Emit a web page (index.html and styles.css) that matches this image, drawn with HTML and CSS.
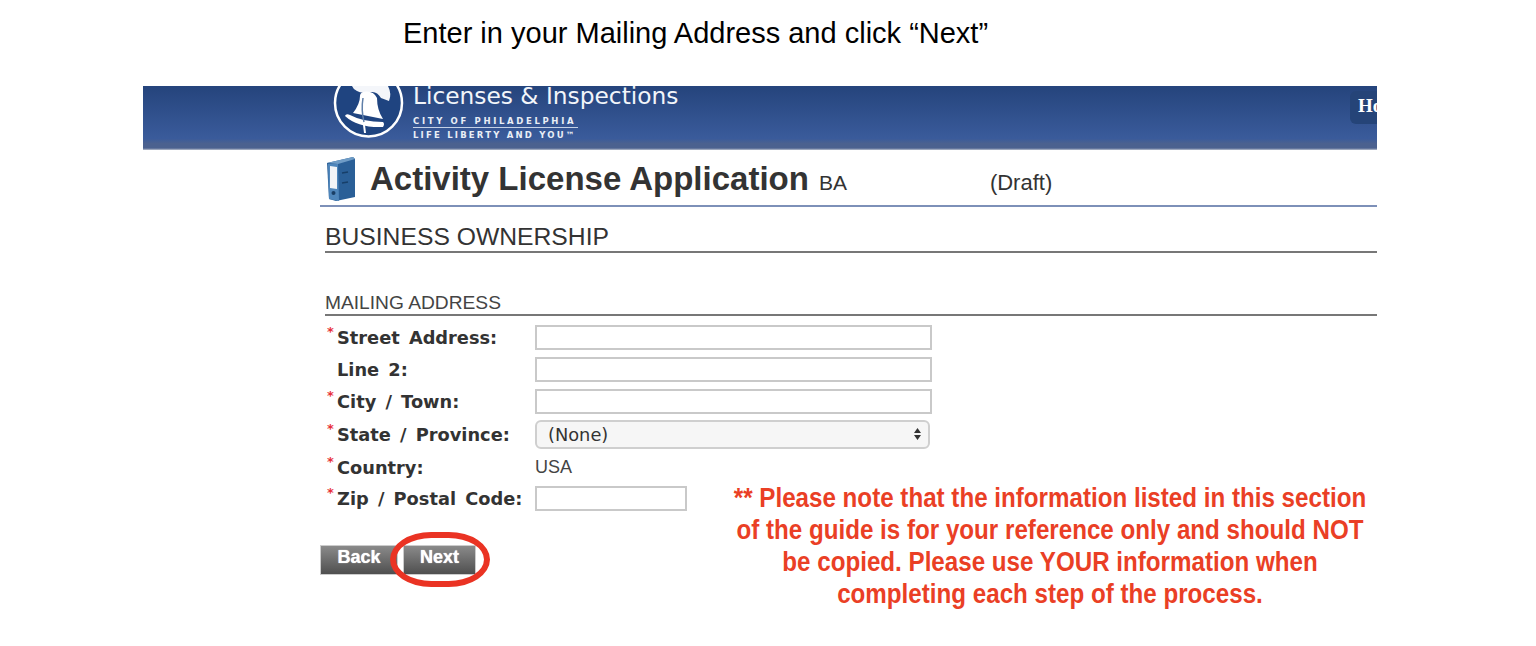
FILE: index.html
```html
<!DOCTYPE html>
<html lang="en">
<head>
<meta charset="utf-8">
<title>Activity License Application</title>
<link rel="stylesheet" href="styles.css">
</head>
<body>
<p class="caption">Enter in your Mailing Address and click “Next”</p>
<div class="frame">
  <header class="banner">
    <svg class="seal" width="74" height="58" viewBox="0 0 74 58" aria-hidden="true">
      <circle cx="35.500" cy="17" r="33.500" fill="#1f4480" stroke="#fff" stroke-width="2.500"/>
      <path d="M19 0 L55 0 Q59 8 56 15 L48 12 Q44 5 38 6 Q28 8 24 5 Q20 3 19 0Z" fill="#f4f6fa"/>
      <path d="M30 6 Q40 4 44 12 Q44 24 50 33 L20 27 Q27 18 27 10 Q27 7 30 6Z" fill="#fff"/>
      <path d="M12 30 Q13 27 17 29 Q30 36 50 36 Q52 38 50 41 Q25 42 12 30Z" fill="#fff"/>
      <path d="M30 12 Q28 24 31 36" stroke="#5f7fa9" stroke-width="1.500" fill="none"/>
      <path d="M31 39 L32 47" stroke="#fff" stroke-width="2" fill="none"/>
    </svg>
    <div class="brand">
      <div class="brand-name">Licenses &amp; Inspections</div>
      <div class="brand-city">CITY OF PHILADELPHIA</div>
      <div class="brand-tag">LIFE LIBERTY AND YOU™</div>
    </div>
    <div class="home">Home</div>
  </header>
  <main class="content">
    <div class="title-row">
      <svg class="binder" width="29" height="45" viewBox="0 0 29 45" aria-hidden="true">
        <path d="M0 6 L26 0 L28 2 L28 40 L9 44 L2 42Z" fill="#2a5f97"/>
        <path d="M0 6 L26 0 L28 2 L11 7Z" fill="#6f9cc6"/>
        <path d="M1 7 L11 7 L12 44 L2 42Z" fill="#4f86bb"/>
        <path d="M3 9 L10 10 L10 32 L3 31Z" fill="#f2f4f7"/>
        <path d="M15 16 L21 15 M15 26 L21 25" stroke="#173f69" stroke-width="1.500"/>
        <circle cx="6.500" cy="36" r="2" fill="#1a3f66"/>
      </svg>
      <h1 class="app-title">Activity License Application</h1>
      <span class="app-code">BA</span>
      <span class="app-state">(Draft)</span>
    </div>
    <h2 class="section-title">BUSINESS OWNERSHIP</h2>
    <h3 class="sub-title">MAILING ADDRESS</h3>
    <form class="form">
      <label class="label req">Street Address:</label><input class="field" type="text">
      <label class="label">Line 2:</label><input class="field" type="text">
      <label class="label req">City / Town:</label><input class="field" type="text">
      <label class="label req">State / Province:</label>
      <div class="select"><span>(None)</span>
        <svg width="9" height="14" viewBox="0 0 9 14" aria-hidden="true"><path d="M4.500 1 L8 6 H1Z M4.500 13 L8 8 H1Z" fill="#333"/></svg>
      </div>
      <label class="label req">Country:</label><div class="value">USA</div>
      <label class="label req">Zip / Postal Code:</label><input class="field zip" type="text">
    </form>
    <div class="actions">
      <button class="btn btn-back" type="button">Back</button>
      <button class="btn btn-next" type="button">Next</button>
      <span class="ring"></span>
    </div>
  </main>
  <p class="note">** Please note that the information listed in this section<br>of the guide is for your reference only and should NOT<br>be copied. Please use YOUR information when<br>completing each step of the process.</p>
</div>
</body>
</html>
```
FILE: styles.css
```css
html, body {
  margin: 0;
  height: 646px;
  overflow: hidden;
  background: #fff;
  font-family: "Liberation Sans", Arial, sans-serif;
  color: #333;
}
.caption {
  margin: 0;
  padding: 17px 0 0 403px;
  height: 86px;
  box-sizing: border-box;
  font-size: 29px;
  line-height: 32px;
  color: #000;
}
.frame {
  position: relative;
  width: 1234px;
  margin-left: 143px;
}
.banner {
  position: relative;
  display: flex;
  align-items: flex-start;
  height: 64px;
  box-sizing: border-box;
  padding-left: 190px;
  background: linear-gradient(#25447c, #3a5b9b 82%, #4b618f 90%, #4b618f 97%, #b9bfcc);
  overflow: hidden;
}
.seal { flex: none; }
.brand { margin-left: 6px; color: #fff; }
.brand-name {
  margin-top: -4px;
  font-family: "DejaVu Sans", sans-serif;
  font-size: 23.300px;
  line-height: 27px;
  color: #f2f5fa;
  white-space: nowrap;
}
.brand-city, .brand-tag {
  font-family: "DejaVu Sans", sans-serif;
  font-weight: 700;
  font-size: 8.500px;
  line-height: 12px;
  white-space: nowrap;
  width: 165px;
  color: #e9eef6;
}
.brand-city {
  margin-top: 6px;
  letter-spacing: 2.650px;
  border-bottom: 1px solid #c5d2e6;
}
.brand-tag { letter-spacing: 2.200px; margin-top: 1px; }
.home {
  position: absolute;
  left: 1207px;
  top: 5px;
  width: 60px;
  height: 33px;
  padding-left: 8px;
  border-radius: 6px;
  background: #254478;
  color: #fff;
  font-family: "Liberation Serif", serif;
  font-weight: 700;
  font-size: 19px;
  line-height: 30px;
}
.content {
  margin-left: 177px;
}
.title-row {
  display: flex;
  align-items: baseline;
  height: 55px;
  padding: 0 0 0 7px;
  border-bottom: 2px solid #7d90b8;
}
.binder {
  align-self: flex-start;
  margin-top: 7px;
  flex: none;
}
.app-title {
  margin: 0 0 0 14px;
  font-size: 33px;
  line-height: 58px;
  font-weight: 700;
  color: #333;
}
.app-code {
  margin-left: 10px;
  font-size: 21px;
}
.app-state {
  margin-left: 143px;
  font-size: 22px;
}
.section-title {
  margin: 0 0 0 5px;
  height: 46px;
  box-sizing: border-box;
  padding-top: 16px;
  border-bottom: 2px solid #777;
  font-weight: 400;
  font-size: 24.700px;
  line-height: 28px;
  color: #333;
}
.sub-title {
  margin: 0 0 0 5px;
  height: 63px;
  box-sizing: border-box;
  padding-top: 39px;
  border-bottom: 2px solid #777;
  font-weight: 400;
  font-size: 19.200px;
  line-height: 22px;
  color: #444;
}
.form {
  display: grid;
  grid-template-columns: 198px 397px;
  grid-template-rows: 32px 32px 32px 34px 31px 32px;
  align-items: center;
  justify-items: start;
  padding: 6px 0 0 17px;
}
.label {
  position: relative;
  font-family: "DejaVu Sans", sans-serif;
  font-weight: 700;
  font-size: 17.800px;
  word-spacing: 3px;
  line-height: 22px;
  color: #333;
  white-space: nowrap;
}
.req::before {
  content: "*";
  position: absolute;
  left: -10px;
  top: -6px;
  color: #e8303a;
  font-size: 13px;
}
.field {
  width: 397px;
  height: 25px;
  box-sizing: border-box;
  border: 2px solid #c9c9c9;
  background: #fff;
  padding: 0;
  margin: 0 0 2px;
}
.zip { width: 152px; }
.select {
  display: flex;
  align-items: center;
  justify-content: space-between;
  width: 395px;
  height: 29px;
  box-sizing: border-box;
  padding: 0 6px 0 11px;
  border: 2px solid #cfcfcf;
  border-radius: 6px;
  background: #f6f6f6;
  font-family: "DejaVu Sans", sans-serif;
  font-size: 17.800px;
  color: #333;
  margin-bottom: 2px;
}
.value { font-size: 18px; color: #444; }
.actions {
  position: relative;
  display: flex;
  gap: 5px;
  margin-top: 30px;
}
.btn {
  height: 30px;
  padding: 0 0 6px;
  border: 1px solid #ccc;
  background: linear-gradient(#8a8a8a, #4f4f4f);
  color: #fff;
  font-family: "Liberation Sans", sans-serif;
  font-weight: 700;
  font-size: 18px;
  text-shadow: 0 0 1px #fff;
}
.btn-back { width: 78px; }
.btn-next { width: 73px; }
.ring {
  position: absolute;
  left: 70px;
  top: -13px;
  width: 100px;
  height: 55px;
  box-sizing: border-box;
  border: 6px solid #ea3323;
  border-radius: 42px / 28px;
}
.note {
  position: absolute;
  left: 527px;
  top: 396px;
  width: 760px;
  margin: 0;
  text-align: center;
  font-weight: 700;
  font-size: 27px;
  line-height: 32px;
  color: #ea3f25;
  white-space: nowrap;
  transform: scaleX(0.895);
}
```
